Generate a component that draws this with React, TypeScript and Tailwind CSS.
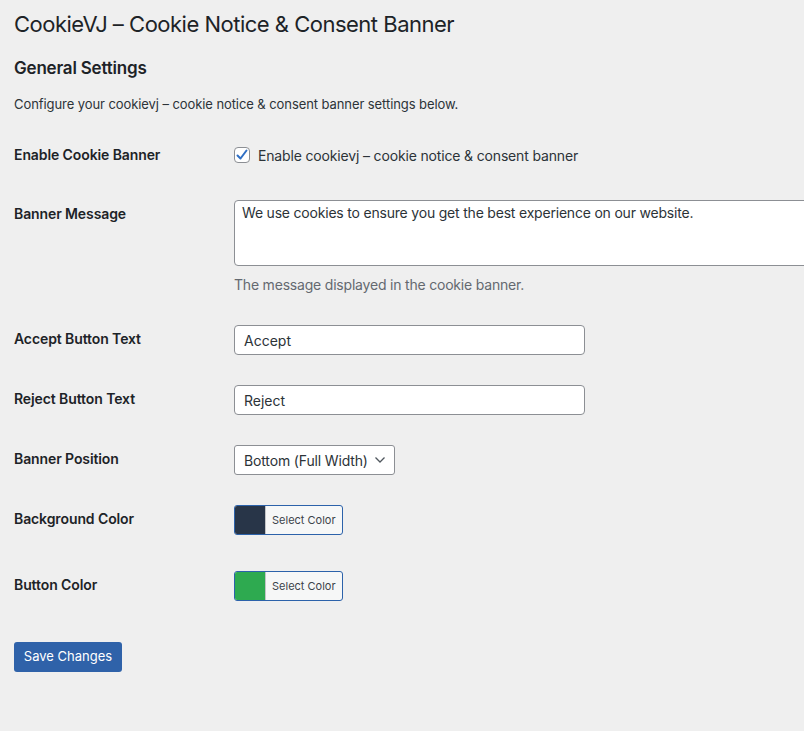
import React from "react";

const font = { fontFamily: "Inter, 'Noto Sans', 'Liberation Sans', sans-serif" };

function Row({ label, children, h }: { label: string; children: React.ReactNode; h: string }) {
  return (
    <div className={`flex ${h}`}>
      <div className="w-[220px] shrink-0 pt-[20px] text-[14px] leading-[18px] font-semibold text-[#1d2327] tracking-[-0.1px]">{label}</div>
      <div className="pt-[15px] min-w-0">{children}</div>
    </div>
  );
}

function ColorBtn({ color }: { color: string }) {
  return (
    <div className="flex h-[30px] w-[109px] rounded-[3px] border border-[#2c62aa] bg-[#f6f7f7] overflow-hidden">
      <div className="w-[30px] h-full" style={{ backgroundColor: color }} />
      <div className="flex-1 flex items-center border-l border-[#c3c4c7] pl-[6px] text-[11px] text-[#3c434a]">Select Color</div>
    </div>
  );
}

export default function App() {
  return (
    <div className="min-h-screen w-full overflow-hidden bg-[#efefef] text-[#1d2327]" style={font}>
      <div className="pl-[14px]">
        <h1 className="pt-[10px] text-[22px] leading-[29px] font-normal tracking-[-0.5px]">CookieVJ – Cookie Notice &amp; Consent Banner</h1>
        <h2 className="mt-[18px] text-[17px] leading-[22px] font-semibold tracking-[-0.2px]">General Settings</h2>
        <p className="mt-[16px] text-[13px] leading-[18px] text-[#2c3338] tracking-[-0.08px]">Configure your cookievj – cookie notice &amp; consent banner settings below.</p>

        <div className="mt-[13px]">
          <Row label="Enable Cookie Banner" h="h-[59px]">
            <div className="flex items-center h-[28px] text-[14px] text-[#2c3338] tracking-[-0.16px]">
              <div className="w-[16px] h-[16px] rounded-[4px] border border-[#8c8f94] bg-white flex items-center justify-center mr-[8px]">
                <svg width="14" height="14" viewBox="0 0 14 14" fill="none">
                  <path d="M2.5 7.5 L5.5 10.5 L11.5 2.5" stroke="#2f6fc4" strokeWidth="2" strokeLinecap="round" strokeLinejoin="round" />
                </svg>
              </div>
              <span>Enable cookievj – cookie notice &amp; consent banner</span>
            </div>
          </Row>
          <Row label="Banner Message" h="h-[125px]">
            <div className="w-[600px] h-[66px] rounded-[4px] border border-[#8c8f94] bg-white px-[7px] pt-[2px] text-[14px] leading-[20px] text-[#2c3338] whitespace-nowrap tracking-[-0.2px]">
              We use cookies to ensure you get the best experience on our website.
            </div>
            <p className="mt-[9px] text-[14px] leading-[20px] text-[#646970] tracking-[-0.2px]">The message displayed in the cookie banner.</p>
          </Row>
          <Row label="Accept Button Text" h="h-[60px]">
            <div className="w-[351px] h-[30px] rounded-[4px] border border-[#8c8f94] bg-white px-[9px] flex items-center text-[14px] text-[#2c3338]">Accept</div>
          </Row>
          <Row label="Reject Button Text" h="h-[60px]">
            <div className="w-[351px] h-[30px] rounded-[4px] border border-[#8c8f94] bg-white px-[9px] flex items-center text-[14px] text-[#2c3338]">Reject</div>
          </Row>
          <Row label="Banner Position" h="h-[60px]">
            <div className="w-[161px] h-[30px] rounded-[3px] border border-[#8c8f94] bg-white pl-[9px] pr-[8px] flex items-center justify-between text-[14px] text-[#2c3338] tracking-[-0.15px]">
              <span>Bottom (Full Width)</span>
              <svg width="12" height="8" viewBox="0 0 12 8" fill="none">
                <path d="M1.5 1.5 L6 6 L10.5 1.5" stroke="#50575e" strokeWidth="1.3" />
              </svg>
            </div>
          </Row>
          <Row label="Background Color" h="h-[66px]">
            <ColorBtn color="#283548" />
          </Row>
          <Row label="Button Color" h="h-[60px]">
            <ColorBtn color="#2eaa50" />
          </Row>
        </div>

        <button className="mt-[26px] h-[30px] w-[108px] rounded-[3px] bg-[#2f62a9] text-white text-[13px] flex items-center justify-center">Save Changes</button>
      </div>
    </div>
  );
}
